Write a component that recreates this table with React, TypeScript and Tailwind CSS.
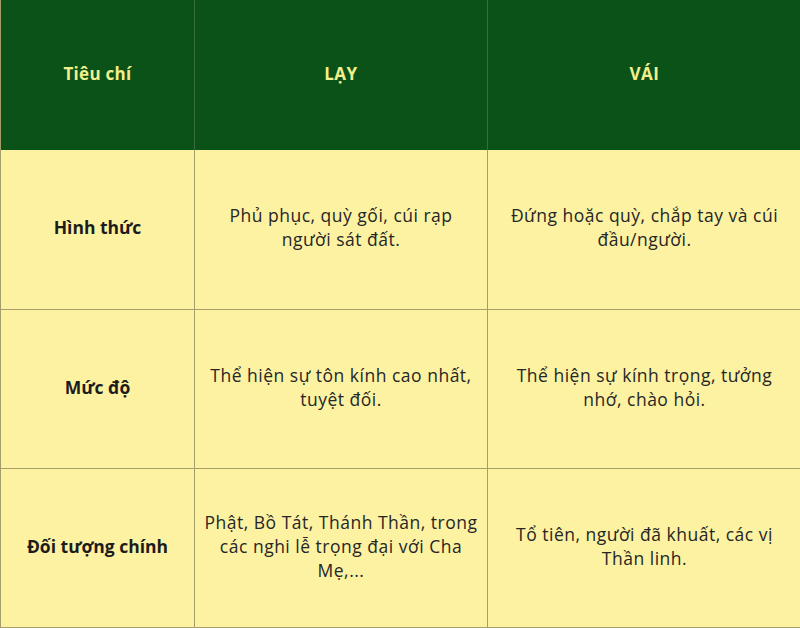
import React from 'react';

const rows = [
  {
    label: 'Hình thức',
    lay: ['Phủ phục, quỳ gối, cúi rạp', 'người sát đất.'],
    vai: ['Đứng hoặc quỳ, chắp tay và cúi', 'đầu/người.'],
  },
  {
    label: 'Mức độ',
    lay: ['Thể hiện sự tôn kính cao nhất,', 'tuyệt đối.'],
    vai: ['Thể hiện sự kính trọng, tưởng', 'nhớ, chào hỏi.'],
  },
  {
    label: 'Đối tượng chính',
    lay: ['Phật, Bồ Tát, Thánh Thần, trong', 'các nghi lễ trọng đại với Cha', 'Mẹ,...'],
    vai: ['Tổ tiên, người đã khuất, các vị', 'Thần linh.'],
  },
];

const Lines: React.FC<{ lines: string[] }> = ({ lines }) => (
  <div className="flex flex-col items-center">
    {lines.map((l) => (
      <span key={l} className="whitespace-nowrap">
        {l}
      </span>
    ))}
  </div>
);

const App: React.FC = () => {
  return (
    <div className="w-[800px] h-[628px] bg-white font-['Open_Sans',sans-serif]">
      <div className="grid grid-cols-[194px_293px_313px] grid-rows-[150px_159px_159px_159px] border-l border-b-2 border-[#a49e6b]">
        <div className="bg-[#0a5218] border-r border-[#3a6b3a] flex items-center justify-center pb-[3px] text-[17px] font-bold tracking-[0.3px] text-[#f2ef8c]">
          Tiêu chí
        </div>
        <div className="bg-[#0a5218] border-r border-[#3a6b3a] flex items-center justify-center pb-[3px] text-[17px] font-bold tracking-[0.5px] text-[#f2ef8c]">
          LẠY
        </div>
        <div className="bg-[#0a5218] flex items-center justify-center pb-[3px] text-[17px] font-bold tracking-[0.5px] text-[#f2ef8c]">
          VÁI
        </div>
        {rows.map((r, i) => (
          <React.Fragment key={r.label}>
            <div
              className={`bg-[#fcf2a1] border-r border-[#a49e6b] flex items-center justify-center pb-1 text-center text-[17.5px] font-bold text-[#1c1c1c] ${i > 0 ? 'border-t' : ''}`}
            >
              {r.label}
            </div>
            <div
              className={`bg-[#fcf2a1] border-r border-[#a49e6b] flex items-center justify-center pb-[5px] text-center text-[17.5px] leading-6 tracking-[0.5px] text-[#262626] ${i > 0 ? 'border-t' : ''}`}
            >
              <Lines lines={r.lay} />
            </div>
            <div
              className={`bg-[#fcf2a1] flex items-center justify-center pb-[5px] text-center text-[17.5px] leading-6 tracking-[0.5px] text-[#262626] ${i > 0 ? 'border-t border-[#a49e6b]' : ''}`}
            >
              <Lines lines={r.vai} />
            </div>
          </React.Fragment>
        ))}
      </div>
    </div>
  );
};

export default App;
